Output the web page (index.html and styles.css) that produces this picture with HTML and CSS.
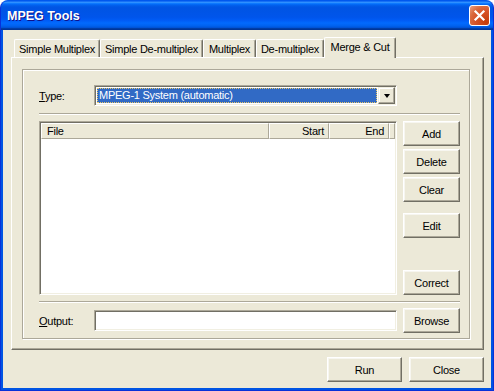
FILE: index.html
```html
<!DOCTYPE html>
<html lang="en">
<head>
    <meta charset="UTF-8">
    <title>MPEG Tools</title>
    <link rel="stylesheet" href="styles.css">
</head>
<body>
    <div class="window">
        <div class="titlebar">
            <span class="title">MPEG Tools</span>
            <div class="close-btn">
                <svg width="13" height="13" viewBox="0 0 13 13">
                    <path d="M2.5 2.5 L10.5 10.5 M10.5 2.5 L2.5 10.5" stroke="#fff" stroke-width="2.2" stroke-linecap="square"/>
                </svg>
            </div>
        </div>

        <div class="client">
            <div class="tabs">
                <div class="tab tab-1">Simple Multiplex</div>
                <div class="tab tab-2">Simple De-multiplex</div>
                <div class="tab tab-3">Multiplex</div>
                <div class="tab tab-4">De-multiplex</div>
                <div class="tab tab-5 active">Merge &amp; Cut</div>
            </div>

            <div class="panel">
                <div class="group">
                    <div class="type-row">
                        <label class="field-label"><u>T</u>ype:</label>
                        <div class="combo">
                            <div class="combo-value">MPEG-1 System (automatic)</div>
                            <div class="combo-arrow"><span class="tri"></span></div>
                        </div>
                    </div>

                    <div class="sep"></div>

                    <div class="main">
                        <div class="listview">
                            <div class="lv-header">
                                <div class="col col-file">File</div>
                                <div class="col col-start">Start</div>
                                <div class="col col-end">End</div>
                                <div class="col col-rest"></div>
                            </div>
                        </div>
                        <div class="side-buttons">
                            <button class="btn">Add</button>
                            <button class="btn">Delete</button>
                            <button class="btn">Clear</button>
                            <button class="btn btn-edit">Edit</button>
                            <button class="btn btn-correct">Correct</button>
                        </div>
                    </div>

                    <div class="sep sep-lower"></div>

                    <div class="output-row">
                        <label class="field-label"><u>O</u>utput:</label>
                        <div class="textbox"></div>
                        <button class="btn">Browse</button>
                    </div>
                </div>
            </div>

            <div class="footer">
                <button class="btn btn-wide">Run</button>
                <button class="btn btn-wide">Close</button>
            </div>
        </div>
    </div>
</body>
</html>
```

FILE: styles.css
```css
body {
    margin: 0;
    font-family: "Liberation Sans", Arial, sans-serif;
    font-size: 11px;
    letter-spacing: -0.25px;
    color: #000;
    background: #fff;
}

/* window frame */
.window {
    width: 494px;
    height: 391px;
    box-sizing: border-box;
    background: #0054e3;
    border: 1px solid #0831d9;
    border-top-color: #0058ee;
    border-radius: 8px 8px 0 0;
    display: flex;
    flex-direction: column;
}
.titlebar {
    height: 29px;
    display: flex;
    align-items: center;
    padding: 0 3px 0 6px;
    border-radius: 7px 7px 0 0;
    background: linear-gradient(to bottom,
        #0058ee 0%, #3593ff 4%, #288eff 6%, #127dff 8%, #036ffc 10%,
        #0262ee 14%, #0057e5 20%, #0054e3 24%, #0055eb 56%, #005bf5 66%,
        #026afe 76%, #0062ef 86%, #0052d6 92%, #0040ab 94%, #003092 100%);
}
.title {
    flex: 1;
    color: #fff;
    font-weight: bold;
    font-size: 12.5px;
    letter-spacing: 0;
    text-shadow: 1px 1px #0f1089;
    padding-top: 1px;
}
.close-btn {
    width: 21px;
    height: 21px;
    box-sizing: border-box;
    border: 1px solid #fff;
    border-radius: 3px;
    display: flex;
    align-items: center;
    justify-content: center;
    background: radial-gradient(circle at 85% 85%, #c43c0a 0%, #d8552a 50%, #d96a3e 70%, #eba083 100%);
}

/* client area */
.client {
    flex: 1;
    margin: 0 2px 2px;
    background: #ece9d8;
    padding: 7px 0 0 8px;
}

/* tabs */
.tabs {
    display: flex;
    align-items: flex-end;
    height: 20px;
    padding-left: 3px;
}
.tab {
    height: 18px;
    box-sizing: border-box;
    border-top: 1px solid #fff;
    border-left: 1px solid #fff;
    border-right: 1px solid #716f64;
    box-shadow: inset -1px 0 #aca899;
    border-radius: 2px 2px 0 0;
    background: #ece9d8;
    display: flex;
    align-items: center;
    justify-content: center;
    padding-top: 1px;
    white-space: nowrap;
}
.tab-1 { width: 86px; }
.tab-2 { width: 103px; }
.tab-3 { width: 53px; }
.tab-4 { width: 68px; }
.tab-5 { width: 72px; }
.tab.active {
    height: 21px;
    margin-bottom: -1px;
    position: relative;
    z-index: 1;
    padding-top: 0;
    padding-bottom: 3px;
}

.panel {
    width: 473px;
    height: 293px;
    box-sizing: border-box;
    border: 1px solid;
    border-color: #fff #716f64 #716f64 #fff;
    box-shadow: inset -1px -1px #aca899;
    padding: 11px 0 0 10px;
}

/* etched group frame */
.group {
    width: 448px;
    height: 270px;
    box-sizing: border-box;
    border: 1px solid #aca899;
    box-shadow: 1px 1px 0 #fff, inset 1px 1px 0 #fff;
    padding: 15px 9px 0 16px;
}

.type-row,
.output-row {
    display: flex;
    align-items: center;
}
.field-label {
    width: 55px;
    flex-shrink: 0;
}

/* sunken fields */
.combo,
.textbox,
.listview {
    box-sizing: border-box;
    border: 1px solid;
    border-color: #aca899 #fff #fff #aca899;
    box-shadow: inset 1px 1px #716f64, inset -1px -1px #f1efe2;
    background: #fff;
}
.combo {
    width: 303px;
    height: 21px;
    display: flex;
    padding: 1px;
}
.combo-value {
    flex: 1;
    margin: 1px;
    background: #316ac5;
    color: #fff;
    border: 1px dotted #e9c86a;
    padding-left: 1px;
    line-height: 13px;
}
.combo-arrow {
    width: 17px;
    height: 17px;
    box-sizing: border-box;
    background: #ece9d8;
    border: 1px solid;
    border-color: #f1efe2 #716f64 #716f64 #f1efe2;
    box-shadow: inset -1px -1px #aca899, inset 1px 1px #fff;
    display: flex;
    align-items: center;
    justify-content: center;
}
.tri {
    width: 0;
    height: 0;
    border-left: 3.5px solid transparent;
    border-right: 3.5px solid transparent;
    border-top: 4px solid #000;
    margin-top: 1px;
}

.sep {
    height: 0;
    border-top: 1px solid #aca899;
    border-bottom: 1px solid #fff;
    margin: 7px 0 6px;
}
.sep-lower {
    margin: 6px 0 5px;
}

.main {
    display: flex;
    gap: 6px;
    height: 174px;
}
.listview {
    width: 358px;
    padding: 1px;
}
.lv-header {
    display: flex;
    height: 16px;
}
.col {
    box-sizing: border-box;
    background: #ece9d8;
    border-top: 1px solid #fff;
    border-left: 1px solid #fff;
    border-right: 1px solid #aca899;
    border-bottom: 1px solid #aca899;
    line-height: 14px;
    white-space: nowrap;
}
.col-file { width: 228px; padding-left: 5px; }
.col-start { width: 60px; text-align: right; padding-right: 4px; }
.col-end { width: 60px; text-align: right; padding-right: 4px; }
.col-rest { flex: 1; }

.side-buttons {
    width: 57px;
    display: flex;
    flex-direction: column;
    gap: 3px;
}
.btn-edit { margin-top: 8px; }
.btn-correct { margin-top: auto; }

.btn {
    width: 57px;
    height: 25px;
    box-sizing: border-box;
    font: inherit;
    letter-spacing: inherit;
    color: #000;
    background: #ece9d8;
    border: 1px solid;
    border-color: #fff #716f64 #716f64 #fff;
    box-shadow: inset -1px -1px #aca899, inset 1px 1px #f7f6f0;
    padding: 0;
    flex-shrink: 0;
}

.textbox {
    width: 303px;
    height: 21px;
    margin-right: 6px;
}

.footer {
    display: flex;
    justify-content: flex-end;
    gap: 7px;
    margin-top: 7px;
    padding-right: 7px;
}
.btn-wide { width: 75px; }
```
